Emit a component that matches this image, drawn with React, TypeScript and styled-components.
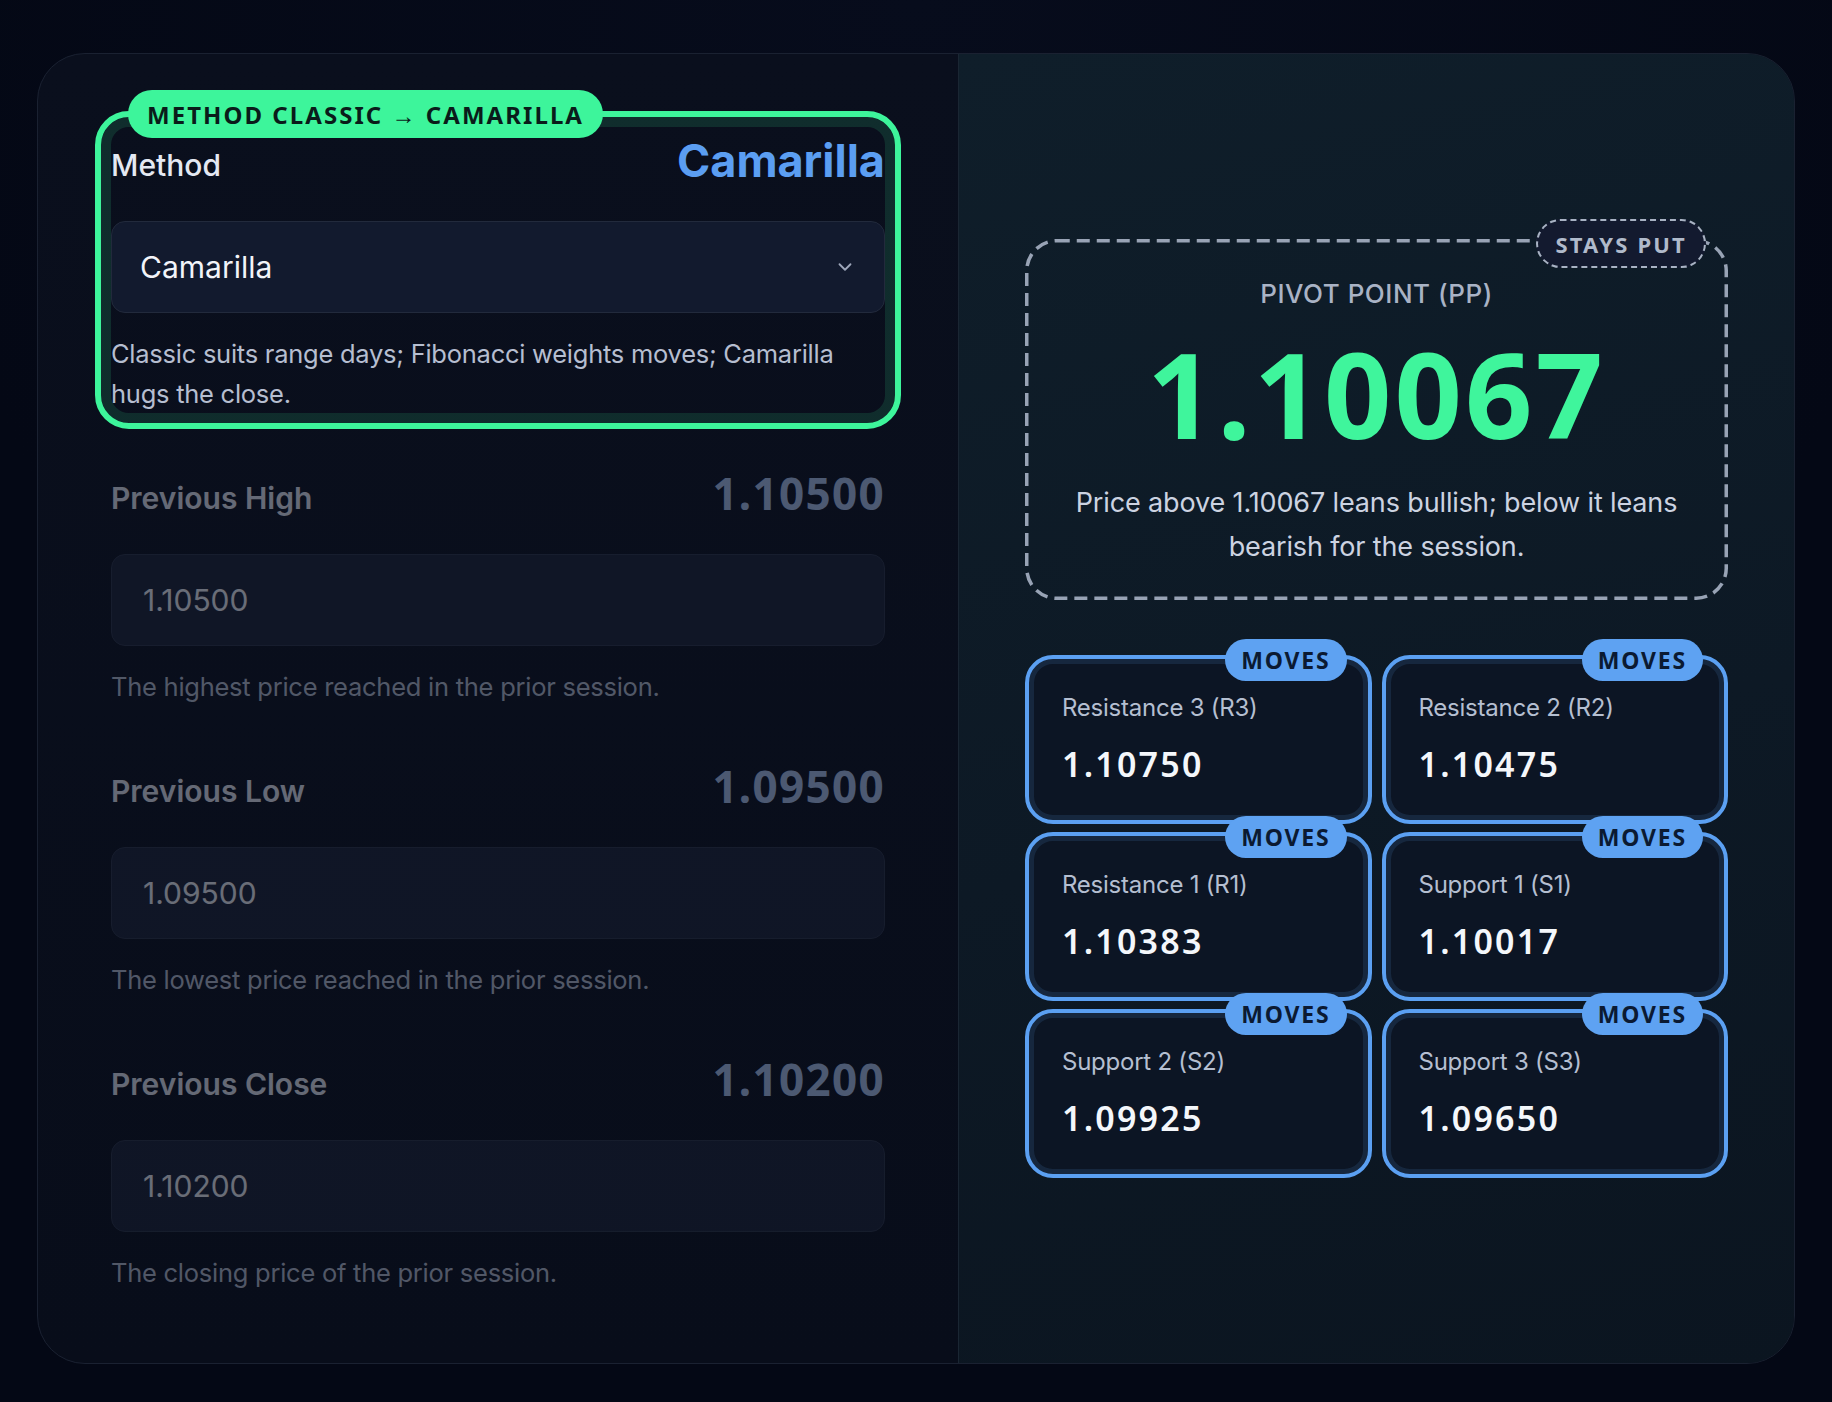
import React from "react";
import styled, { createGlobalStyle } from "styled-components";
import { ChevronDown } from "lucide-react";

const GlobalStyle = createGlobalStyle`
  * { box-sizing: border-box; }
  html, body {
    margin: 0;
    padding: 0;
    background: #040815;
  }
  body {
    font-family: Inter, "Noto Sans", sans-serif;
    color: #e6e9f2;
  }
`;

const Page = styled.div`
  min-height: 1402px;
  padding: 53px 37px 38px;
  background: radial-gradient(circle at 50% 0%, #070c1c 0%, #040815 60%);
`;

const Shell = styled.div`
  display: grid;
  grid-template-columns: 920px 1fr;
  border: 1px solid #1a2131;
  border-radius: 48px;
  overflow: hidden;
  background: linear-gradient(180deg, #0a0f1d 0%, #080d1a 100%);
`;

const Inputs = styled.div`
  display: flex;
  flex-direction: column;
  gap: 58px;
  padding: 85px 73px 70px;
`;

const Results = styled.div`
  display: flex;
  flex-direction: column;
  justify-content: center;
  padding: 0 66px;
  border-left: 1px solid #1a2633;
  background: linear-gradient(165deg, #0f1e2a 0%, #0d1925 55%, #0b1520 100%);
`;

const Field = styled.div<{ $dim?: boolean }>`
  display: flex;
  flex-direction: column;
  opacity: ${(p) => (p.$dim ? 0.42 : 1)};
`;

const Highlight = styled.div`
  position: relative;
  margin: -28px -16px -15px;
  padding: 22px 10px 9px;
  border: 6px solid #3df59b;
  border-radius: 34px;
  box-shadow: inset 0 0 0 10px rgba(61, 245, 155, 0.13);
`;

const ChangeBadge = styled.div`
  position: absolute;
  top: -27px;
  left: 27px;
  height: 48px;
  display: flex;
  align-items: center;
  padding: 0 19px;
  border-radius: 999px;
  background: #3df59b;
  color: #0a1c1a;
  font-family: "Noto Sans", sans-serif;
  font-weight: 700;
  font-size: 24px;
  letter-spacing: 0.085em;
  white-space: nowrap;
`;

const LabelRow = styled.div`
  display: flex;
  justify-content: space-between;
  align-items: center;
  height: 53px;
`;

const Label = styled.div<{ $weight?: number }>`
  margin-top: -2px;
  font-size: 30px;
  font-weight: ${(p) => p.$weight ?? 600};
  color: #e4e8f2;
`;

const MethodName = styled.div`
  margin-top: -10px;
  font-size: 45px;
  font-weight: 700;
  color: #5b9ef2;
`;

const FieldValue = styled.div`
  margin-top: -12px;
  font-family: "Noto Sans", sans-serif;
  font-size: 44px;
  font-weight: 700;
  letter-spacing: 0.03em;
  color: #aac2ea;
`;

const SelectBox = styled.div`
  margin-top: 29px;
  height: 92px;
  display: flex;
  align-items: center;
  justify-content: space-between;
  padding: 0 28px;
  border: 1px solid #222a3c;
  border-radius: 14px;
  background: #121a2e;
  font-size: 30px;
  color: #f2f4f9;
  svg {
    color: #9ea7bb;
  }
`;

const NumberInput = styled.input`
  margin-top: 29px;
  height: 92px;
  width: 100%;
  padding: 0 31px;
  border: 1px solid #2b3347;
  border-radius: 14px;
  background: #1a2136;
  font-family: Inter, sans-serif;
  font-size: 30px;
  color: #eef1f7;
  outline: none;
`;

const Help = styled.div`
  margin-top: 21px;
  font-size: 25.5px;
  line-height: 40px;
  letter-spacing: -0.01em;
  color: #b6bed0;
`;

const PivotBox = styled.div`
  position: relative;
  padding: 37px 43px 31px;
  text-align: center;
`;

const DashedFrame = styled.svg`
  position: absolute;
  inset: 0;
  width: 100%;
  height: 100%;
  overflow: visible;
  pointer-events: none;
  rect {
    x: 1.75px;
    y: 1.75px;
    width: calc(100% - 3.5px);
    height: calc(100% - 3.5px);
    rx: 30px;
    fill: none;
    stroke: #98a3b5;
    stroke-width: 3.5px;
    stroke-dasharray: 13 7;
  }
`;

const StaysBadge = styled.div`
  position: absolute;
  top: -20px;
  right: 22px;
  height: 49px;
  display: flex;
  align-items: center;
  padding: 0 17px;
  border: 2px dashed #a8b2c3;
  border-radius: 999px;
  background: #131a2f;
  color: #b0bacb;
  font-family: "Noto Sans", sans-serif;
  font-weight: 700;
  font-size: 22px;
  letter-spacing: 0.1em;
`;

const PivotTitle = styled.div`
  font-size: 26px;
  line-height: 36px;
  font-weight: 500;
  letter-spacing: 0.02em;
  color: #a9b3c5;
  text-transform: uppercase;
`;

const PivotValue = styled.div`
  margin-top: 17px;
  font-family: "Noto Sans", sans-serif;
  font-size: 118px;
  line-height: 130px;
  font-weight: 700;
  letter-spacing: 0.025em;
  color: #3ff59c;
`;

const PivotNote = styled.div`
  margin: 22px auto 0;
  max-width: 620px;
  font-size: 27px;
  line-height: 44px;
  letter-spacing: -0.005em;
  color: #ccd3e1;
`;

const LevelGrid = styled.div`
  margin-top: 55px;
  display: grid;
  grid-template-columns: 1fr 1fr;
  column-gap: 10px;
  row-gap: 8px;
`;

const LevelCard = styled.div`
  position: relative;
  padding: 32px 32px 32px 33px;
  border: 4px solid #5ba0f2;
  border-radius: 28px;
  background: #0c1524;
  box-shadow: inset 0 0 0 5px rgba(91, 160, 242, 0.13);
`;

const MovesBadge = styled.div`
  position: absolute;
  top: -20px;
  right: 21px;
  height: 42px;
  display: flex;
  align-items: center;
  padding: 0 16px;
  border-radius: 999px;
  background: #5ea2f2;
  color: #0b1a32;
  font-family: "Noto Sans", sans-serif;
  font-weight: 700;
  font-size: 23px;
  letter-spacing: 0.08em;
`;

const LevelLabel = styled.div`
  font-size: 24px;
  line-height: 34px;
  letter-spacing: -0.01em;
  color: #b5bfd1;
`;

const LevelValue = styled.div`
  margin-top: 16px;
  font-family: "Noto Sans", sans-serif;
  font-size: 34px;
  line-height: 47px;
  font-weight: 600;
  letter-spacing: 0.065em;
  color: #f4f7fb;
`;

const priceFields = [
  { label: "Previous High", value: "1.10500", help: "The highest price reached in the prior session." },
  { label: "Previous Low", value: "1.09500", help: "The lowest price reached in the prior session." },
  { label: "Previous Close", value: "1.10200", help: "The closing price of the prior session." },
];

const levels = [
  { label: "Resistance 3 (R3)", value: "1.10750" },
  { label: "Resistance 2 (R2)", value: "1.10475" },
  { label: "Resistance 1 (R1)", value: "1.10383" },
  { label: "Support 1 (S1)", value: "1.10017" },
  { label: "Support 2 (S2)", value: "1.09925" },
  { label: "Support 3 (S3)", value: "1.09650" },
];

const App: React.FC = () => {
  const pivot = "1.10067";

  return (
    <Page>
      <GlobalStyle />
      <Shell>
        <Inputs>
          <Highlight>
            <ChangeBadge>METHOD CLASSIC → CAMARILLA</ChangeBadge>
            <Field>
              <LabelRow>
                <Label $weight={500}>Method</Label>
                <MethodName>Camarilla</MethodName>
              </LabelRow>
              <SelectBox>
                Camarilla
                <ChevronDown size={22} strokeWidth={2} />
              </SelectBox>
              <Help>
                Classic suits range days; Fibonacci weights moves; Camarilla hugs the close.
              </Help>
            </Field>
          </Highlight>

          {priceFields.map((f) => (
            <Field $dim key={f.label}>
              <LabelRow>
                <Label>{f.label}</Label>
                <FieldValue>{f.value}</FieldValue>
              </LabelRow>
              <NumberInput type="text" defaultValue={f.value} />
              <Help>{f.help}</Help>
            </Field>
          ))}
        </Inputs>

        <Results>
          <PivotBox>
            <DashedFrame>
              <rect />
            </DashedFrame>
            <StaysBadge>STAYS PUT</StaysBadge>
            <PivotTitle>Pivot Point (PP)</PivotTitle>
            <PivotValue>{pivot}</PivotValue>
            <PivotNote>
              Price above {pivot} leans bullish; below it leans bearish for the session.
            </PivotNote>
          </PivotBox>

          <LevelGrid>
            {levels.map((l) => (
              <LevelCard key={l.label}>
                <MovesBadge>MOVES</MovesBadge>
                <LevelLabel>{l.label}</LevelLabel>
                <LevelValue>{l.value}</LevelValue>
              </LevelCard>
            ))}
          </LevelGrid>
        </Results>
      </Shell>
    </Page>
  );
};

export default App;
